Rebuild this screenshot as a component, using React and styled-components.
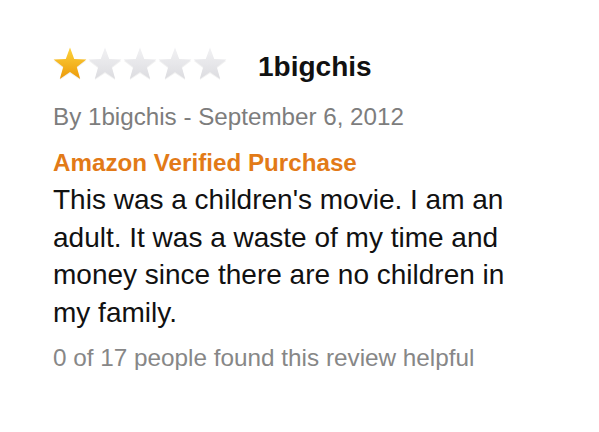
import React from 'react';
import styled, { createGlobalStyle } from 'styled-components';

const GlobalStyle = createGlobalStyle`
  html, body {
    margin: 0;
    padding: 0;
    background: #ffffff;
  }
  body {
    font-family: "Liberation Sans", Arial, sans-serif;
  }
`;

const STAR = 'M17 0.6 L21.2 12.1 L33.4 12.5 L23.8 20.1 L27.2 31.9 L17 25 L6.8 31.9 L10.2 20.1 L0.6 12.5 L12.8 12.1 Z';

function Star({ filled, id }) {
  return (
    <svg width="35" height="34" viewBox="0 0 35 34">
      <defs>
        <linearGradient id={id} x1="0" y1="0" x2="0" y2="1">
          {filled ? (
            <>
              <stop offset="0%" stopColor="#fdd33c" />
              <stop offset="100%" stopColor="#ec9a0a" />
            </>
          ) : (
            <>
              <stop offset="0%" stopColor="#f2f2f4" />
              <stop offset="100%" stopColor="#dcdce0" />
            </>
          )}
        </linearGradient>
      </defs>
      <path d={STAR} transform="translate(0 1.2)" fill="#000" opacity="0.06" />
      <path d={STAR} fill={`url(#${id})`} />
    </svg>
  );
}

function Rating({ value }) {
  return (
    <Stars>
      {[1, 2, 3, 4, 5].map((n) => (
        <Star key={n} id={`star-${n}`} filled={n <= value} />
      ))}
    </Stars>
  );
}

export default function App() {
  return (
    <>
      <GlobalStyle />
      <Review>
        <Header>
          <Rating value={1} />
          <Title>1bigchis</Title>
        </Header>
        <Byline>By 1bigchis - September 6, 2012</Byline>
        <Verified>Amazon Verified Purchase</Verified>
        <Body>
          This was a children's movie. I am an adult. It was a waste of my time and money since there are no children in my family.
        </Body>
        <Helpful>0 of 17 people found this review helpful</Helpful>
      </Review>
    </>
  );
}

const Review = styled.div`
  width: 462px;
  padding: 47px 0 0 53px;
`;

const Header = styled.div`
  display: flex;
  align-items: flex-start;
  gap: 30px;
`;

const Stars = styled.div`
  display: flex;
  align-items: center;
`;

const Title = styled.h2`
  margin: 0;
  padding-top: 3px;
  font-size: 28px;
  line-height: 34px;
  font-weight: bold;
  color: #111111;
`;

const Byline = styled.p`
  margin: 21px 0 0 0;
  font-size: 24.2px;
  line-height: 24px;
  color: #7d7d7d;
`;

const Verified = styled.p`
  margin: 22px 0 0 0;
  font-size: 24.2px;
  line-height: 24px;
  font-weight: bold;
  color: #e27a17;
`;

const Body = styled.p`
  margin: 6px 0 0 0;
  font-size: 28px;
  line-height: 37.5px;
  color: #111111;
`;

const Helpful = styled.p`
  margin: 15px 0 0 0;
  font-size: 24.3px;
  line-height: 24px;
  color: #878787;
`;
